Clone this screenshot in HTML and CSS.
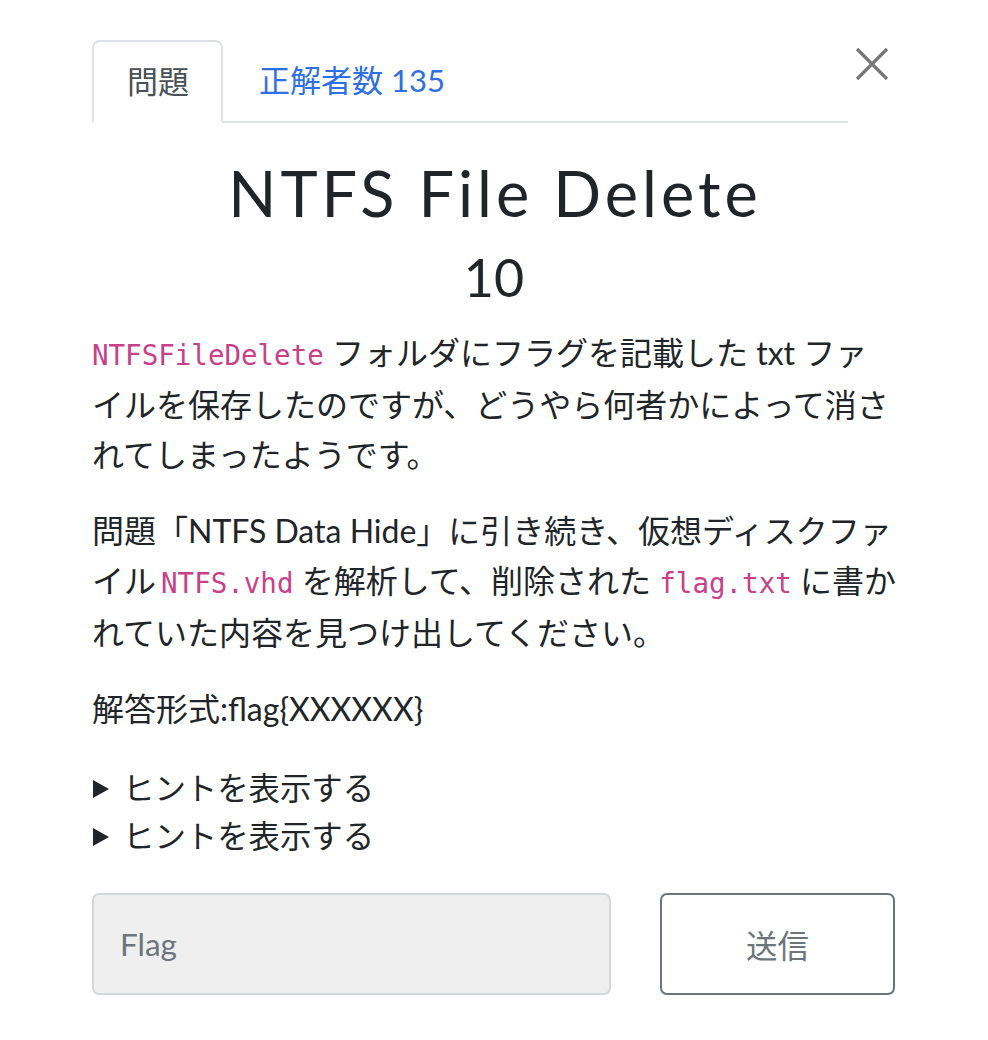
FILE: index.html
```html
<!DOCTYPE html>
<html lang="ja">
<head>
<meta charset="utf-8">
<title>NTFS File Delete</title>
<link rel="stylesheet" href="styles.css">
</head>
<body>
<div class="modal">
  <button class="close" aria-label="Close">
    <svg width="34" height="34" viewBox="0 0 34 34"><path d="M2 2 L32 32 M32 2 L2 32" stroke="#777" stroke-width="3.2" stroke-linecap="butt" fill="none"/></svg>
  </button>
  <nav class="tabs">
    <a class="tab active">問題</a>
    <a class="tab link">正解者数 135</a>
  </nav>
  <div class="body">
    <h2 class="title">NTFS File Delete</h2>
    <h3 class="value">10</h3>
    <p><code>NTFSFileDelete</code> フォルダにフラグを記載した txt ファイルを保存したのですが、どうやら何者かによって消されてしまったようです。</p>
    <p>問題「NTFS Data Hide」に引き続き、仮想ディスクファイル<code class="lead">NTFS.vhd</code> を解析して、削除された <code>flag.txt</code> に書かれていた内容を見つけ出してください。</p>
    <p>解答形式:flag{XXXXXX}</p>
    <div class="hints">
      <details class="hint"><summary>ヒントを表示する</summary></details>
      <details class="hint"><summary>ヒントを表示する</summary></details>
    </div>
    <form class="submit-row">
      <input class="flag" type="text" placeholder="Flag">
      <button class="send" type="button">送信</button>
    </form>
  </div>
</div>
</body>
</html>
```

FILE: styles.css
```css
html, body {
  margin: 0;
  padding: 0;
  background: #fff;
}
body {
  font-family: Lato, "Noto Sans CJK JP", sans-serif;
  color: #212529;
}
.modal {
  position: relative;
  width: 804px;
  margin-left: 92px;
  padding-top: 40px;
}
.close {
  position: absolute;
  top: 47px;
  left: 763px;
  width: 34px;
  height: 34px;
  padding: 0;
  border: 0;
  background: none;
}
.close svg { display: block; }
.tabs {
  display: flex;
  width: 756px;
  border-bottom: 2px solid #dee2e6;
}
.tab {
  display: block;
  height: 81px;
  box-sizing: border-box;
  padding: 0 34px;
  font-size: 31px;
  line-height: 81px;
  margin-bottom: -2px;
}
.tab.active {
  color: #495057;
  border: 2px solid #dee2e6;
  border-bottom: 2px solid #fff;
  border-radius: 8px 8px 0 0;
  height: 83px;
  line-height: 79px;
  padding: 0 32px 0 33px;
}
.tab.link {
  color: #2f6fe4;
  padding-left: 36px;
}
.body {
  padding-top: 28px;
}
.title {
  margin: 0;
  text-align: center;
  font-weight: 400;
  font-size: 63px;
  line-height: 84px;
  letter-spacing: 4px;
  text-indent: 2px;
}
.value {
  margin: 0 0 9px;
  text-align: center;
  font-weight: 400;
  font-size: 52px;
  line-height: 84px;
}
p {
  margin: 0 0 26px;
  font-size: 32px;
  line-height: 50px;
}
code {
  font-family: "DejaVu Sans Mono", monospace;
  font-size: 27.5px;
  color: #c9408a;
}
code.lead {
  margin-left: 5px;
}
.hints {
  padding-top: 4px;
}
.hint {
  font-size: 31.4px;
  line-height: 48px;
}
.hint summary {
  cursor: pointer;
  list-style: none;
  display: flex;
  align-items: center;
}
.hint summary::-webkit-details-marker {
  display: none;
}
.hint summary::before {
  content: "";
  width: 0;
  height: 0;
  border-left: 16px solid #212529;
  border-top: 9px solid transparent;
  border-bottom: 9px solid transparent;
  margin: 2px 14px 0 1px;
}
.submit-row {
  display: flex;
  gap: 49px;
  margin-top: 33px;
}
.flag {
  width: 519px;
  height: 102px;
  box-sizing: border-box;
  border: 2px solid #d4d7da;
  border-radius: 7px;
  background: #efefef;
  padding: 0 26px;
  font-family: Lato, "Noto Sans CJK JP", sans-serif;
  font-size: 31.5px;
  color: #495057;
}
.flag::placeholder {
  color: #6c757d;
}
.send {
  width: 235px;
  height: 102px;
  box-sizing: border-box;
  border: 2px solid #6c757d;
  border-radius: 7px;
  background: #fff;
  color: #6c757d;
  font-family: Lato, "Noto Sans CJK JP", sans-serif;
  font-size: 31.5px;
}
```
